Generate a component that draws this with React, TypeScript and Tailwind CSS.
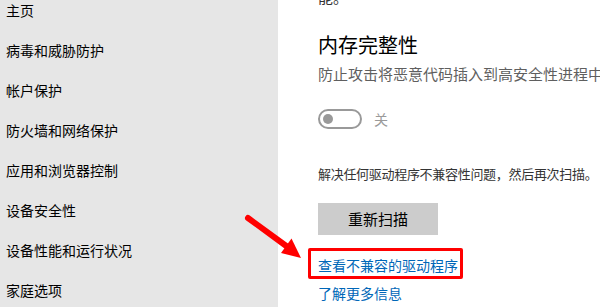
import React from 'react';

const font = { fontFamily: '"Noto Sans CJK SC", "Noto Sans", sans-serif' };

const navItems = [
  '主页',
  '病毒和威胁防护',
  '帐户保护',
  '防火墙和网络保护',
  '应用和浏览器控制',
  '设备安全性',
  '设备性能和运行状况',
  '家庭选项',
];

function Sidebar() {
  return (
    <nav className="w-[278px] shrink-0 bg-[#e6e6e6] overflow-hidden">
      <ul className="-mt-[10px] flex flex-col">
        {navItems.map((item) => (
          <li key={item} className="h-10 flex items-center pl-[6px] text-[14px] text-black whitespace-nowrap">
            {item}
          </li>
        ))}
      </ul>
    </nav>
  );
}

function Toggle() {
  return (
    <div className="flex items-center h-5">
      <div className="w-[44px] h-5 rounded-full border-2 border-[#999999] flex items-center pl-[3px]">
        <div className="w-[10px] h-[10px] rounded-full bg-[#999999]" />
      </div>
      <span className="ml-3 text-[14px] text-[#9a9a9a]">关</span>
    </div>
  );
}

function Arrow() {
  return (
    <svg className="absolute inset-0 pointer-events-none" width="600" height="307" viewBox="0 0 600 307">
      <line x1="248" y1="218" x2="289" y2="248" stroke="#ff0000" strokeWidth="6" strokeLinecap="round" />
      <polygon points="301,258 281,253 291.5,238.5" fill="#ff0000" />
    </svg>
  );
}

export default function App() {
  return (
    <div className="relative w-[600px] h-[307px] flex overflow-hidden bg-white" style={font}>
      <Sidebar />

      {/* Right: memory integrity panel */}
      <main className="flex-1 pl-10 flex flex-col whitespace-nowrap overflow-hidden">
        <div className="-mt-[13px] h-5 flex items-center text-[15px] text-[#333333]">能。</div>
        <h2 className="mt-6 h-7 flex items-center text-[20px] text-black font-normal">内存完整性</h2>
        <p className="mt-1 h-[22px] flex items-center text-[15px] text-[#5f5f5f]">
          防止攻击将恶意代码插入到高安全性进程中。
        </p>
        <div className="mt-6">
          <Toggle />
        </div>
        <p className="mt-[35px] h-5 flex items-center text-[13px] tracking-[-0.3px] text-[#333333]">
          解决任何驱动程序不兼容性问题，然后再次扫描。
        </p>
        <button className="mt-[19px] w-[120px] h-8 bg-[#cccccc] text-[15px] text-black">重新扫描</button>
        <div className="relative mt-5 h-5 flex items-center">
          <a className="text-[14px] text-[#0067b8]">查看不兼容的驱动程序</a>
          <div className="absolute -left-[10px] -top-[7px] w-[155px] h-[31px] border-[3px] border-[#ff0000] rounded-[2px]" />
        </div>
        <a className="mt-2 h-5 flex items-center text-[14px] text-[#0067b8]">了解更多信息</a>
      </main>

      <Arrow />
    </div>
  );
}
